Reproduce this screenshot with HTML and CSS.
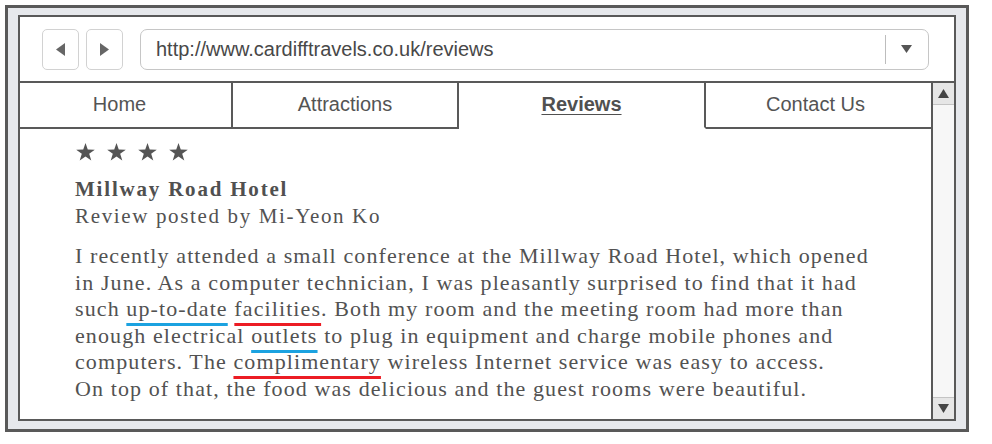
FILE: index.html
```html
<!DOCTYPE html>
<html lang="en">
<head>
<meta charset="utf-8">
<title>Cardiff Travels - Reviews</title>
<link rel="stylesheet" href="styles.css">
</head>
<body>
<div class="window">
  <div class="viewport">
    <div class="toolbar">
      <button class="nav-btn" aria-label="Back">
        <svg width="9" height="13" viewBox="0 0 9 13"><polygon points="9,0 9,13 0,6.5"/></svg>
      </button>
      <button class="nav-btn" aria-label="Forward">
        <svg width="9" height="13" viewBox="0 0 9 13"><polygon points="0,0 0,13 9,6.5"/></svg>
      </button>
      <div class="address">
        <span class="url">http://www.cardifftravels.co.uk/reviews</span>
        <span class="addr-sep"></span>
        <svg class="addr-drop" width="11" height="8" viewBox="0 0 11 8"><polygon points="0,0 11,0 5.5,8"/></svg>
      </div>
    </div>
    <div class="main">
      <div class="page">
        <nav class="tabs">
          <a class="tab tab-home">Home</a>
          <a class="tab tab-attr">Attractions</a>
          <a class="tab tab-reviews active">Reviews</a>
          <a class="tab tab-contact">Contact Us</a>
        </nav>
        <article class="review">
          <div class="stars">
            <svg class="star" viewBox="0 0 20 19"><polygon points="10,0 12.4,6.9 19.8,7 13.9,11.4 16.1,18.6 10,14.3 3.9,18.6 6.1,11.4 0.2,7 7.6,6.9"/></svg>
            <svg class="star" viewBox="0 0 20 19"><polygon points="10,0 12.4,6.9 19.8,7 13.9,11.4 16.1,18.6 10,14.3 3.9,18.6 6.1,11.4 0.2,7 7.6,6.9"/></svg>
            <svg class="star" viewBox="0 0 20 19"><polygon points="10,0 12.4,6.9 19.8,7 13.9,11.4 16.1,18.6 10,14.3 3.9,18.6 6.1,11.4 0.2,7 7.6,6.9"/></svg>
            <svg class="star" viewBox="0 0 20 19"><polygon points="10,0 12.4,6.9 19.8,7 13.9,11.4 16.1,18.6 10,14.3 3.9,18.6 6.1,11.4 0.2,7 7.6,6.9"/></svg>
          </div>
          <h1 class="hotel">Millway Road Hotel</h1>
          <p class="byline">Review posted by Mi-Yeon Ko</p>
          <p class="body">
            <span class="line">I recently attended a small conference at the Millway Road Hotel, which opened</span>
            <span class="line">in June. As a computer technician, I was pleasantly surprised to find that it had</span>
            <span class="line">such <span class="mark blue">up-to-date</span> <span class="mark red">facilities</span>. Both my room and the meeting room had more than</span>
            <span class="line">enough electrical <span class="mark blue">outlets</span> to plug in equipment and charge mobile phones and</span>
            <span class="line">computers. The <span class="mark red">complimentary</span> wireless Internet service was easy to access.</span>
            <span class="line">On top of that, the food was delicious and the guest rooms were beautiful.</span>
          </p>
        </article>
      </div>
      <div class="scrollbar">
        <div class="scroll-btn scroll-up">
          <svg width="11" height="9" viewBox="0 0 11 9"><polygon points="5.5,0 11,9 0,9"/></svg>
        </div>
        <div class="scroll-track"></div>
        <div class="scroll-btn scroll-down">
          <svg width="11" height="9" viewBox="0 0 11 9"><polygon points="0,0 11,0 5.5,9"/></svg>
        </div>
      </div>
    </div>
  </div>
</div>
</body>
</html>
```

FILE: styles.css
```css
html, body {
  margin: 0;
  padding: 0;
  background: #ffffff;
}

.window {
  box-sizing: border-box;
  margin: 5px 0 0 5px;
  width: 964px;
  height: 427px;
  border: 3px solid #595959;
  background: #e6e8ec;
  padding: 7px 10px 8px 10px;
}

.viewport {
  box-sizing: border-box;
  height: 100%;
  border: 2px solid #595959;
  background: #ffffff;
  display: flex;
  flex-direction: column;
}

.toolbar {
  height: 64px;
  flex: 0 0 auto;
  border-bottom: 2px solid #595959;
  display: flex;
  align-items: center;
  padding: 0 25px 0 22px;
  gap: 7px;
}

.nav-btn {
  box-sizing: border-box;
  width: 37px;
  height: 41px;
  border: 1px solid #d2d2d2;
  border-radius: 5px;
  background: #ffffff;
  padding: 0;
  display: flex;
  align-items: center;
  justify-content: center;
}

.nav-btn svg {
  fill: #666666;
}

.address {
  box-sizing: border-box;
  flex: 1;
  height: 41px;
  margin-left: 10px;
  border: 1px solid #c6c6c6;
  border-radius: 7px;
  display: flex;
  align-items: center;
  padding: 0 0 0 15px;
}

.url {
  flex: 1;
  font-family: "Liberation Sans", Arial, sans-serif;
  font-size: 20px;
  color: #484848;
  white-space: nowrap;
}

.addr-sep {
  width: 1px;
  height: 29px;
  background: #bdbdbd;
}

.addr-drop {
  fill: #555555;
  margin: 0 16px 0 15px;
}

.main {
  flex: 1;
  display: flex;
  min-height: 0;
}

.page {
  flex: 1;
  display: flex;
  flex-direction: column;
}

.tabs {
  display: flex;
  height: 46px;
}

.tab {
  box-sizing: border-box;
  height: 46px;
  border-bottom: 2px solid #595959;
  border-right: 2px solid #595959;
  display: flex;
  align-items: center;
  justify-content: center;
  font-family: "Liberation Sans", Arial, sans-serif;
  font-size: 20px;
  color: #545454;
  padding-bottom: 2px;
}

.tab-home { width: 213px; padding-right: 12px; }
.tab-attr { width: 226px; }
.tab-reviews { width: 247px; }
.tab-contact { flex: 1; border-right: none; padding-right: 6px; }

.tab.active {
  border-bottom-color: transparent;
  font-weight: bold;
  text-decoration: underline;
  text-decoration-thickness: 1px;
  text-underline-offset: 3px;
  color: #505050;
}

.review {
  padding-left: 55px;
  color: #525252;
  font-family: "Liberation Serif", "Times New Roman", serif;
}

.stars {
  margin-top: 14px;
  height: 18px;
  display: flex;
  gap: 12px;
  padding-left: 1px;
}

.star {
  width: 19px;
  height: 18px;
  fill: #555555;
}

.hotel {
  margin: 16px 0 0 0;
  font-size: 21px;
  line-height: 24px;
  font-weight: bold;
  letter-spacing: 1.8px;
  color: #505050;
}

.byline {
  margin: 3px 0 0 0;
  font-size: 21px;
  line-height: 24px;
  letter-spacing: 1.65px;
}

.body {
  margin: 15px 0 0 0;
  font-size: 22px;
  line-height: 26.6px;
  letter-spacing: 1.1px;
}

.line {
  display: block;
  white-space: nowrap;
}

.mark {
  text-decoration-line: underline;
  text-decoration-thickness: 3px;
  text-underline-offset: 7px;
}

.mark.blue { text-decoration-color: #1ba2e0; }
.mark.red { text-decoration-color: #ec1c24; }

.scrollbar {
  box-sizing: border-box;
  width: 23px;
  border-left: 2px solid #595959;
  background: #f7f7f7;
  display: flex;
  flex-direction: column;
}

.scroll-btn {
  height: 21px;
  background: #e6e6e6;
  display: flex;
  align-items: center;
  justify-content: center;
}

.scroll-btn svg {
  fill: #444444;
}

.scroll-up {
  border-bottom: 1px solid #c4c4c4;
}

.scroll-down {
  border-top: 1px solid #c4c4c4;
}

.scroll-track {
  flex: 1;
}
```
